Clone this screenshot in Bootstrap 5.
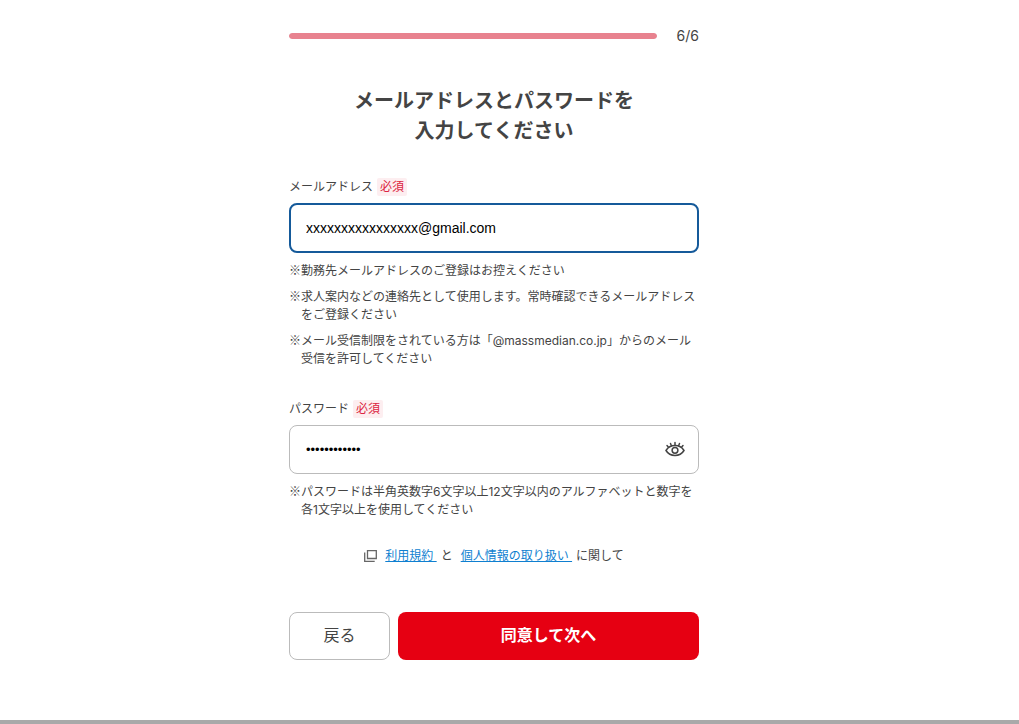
<!DOCTYPE html>
<html lang="ja">
<head>
<meta charset="utf-8">
<meta name="viewport" content="width=device-width, initial-scale=1">
<title>会員登録</title>
<link href="https://cdn.jsdelivr.net/npm/bootstrap@5.3.0/dist/css/bootstrap.min.css" rel="stylesheet">
<style>
  body { font-family: Inter, "Noto Sans CJK JP", sans-serif; font-size: 12px; line-height: 18px; color: #444; background: #fff; }
  .signup-page { padding: 27px 43px 60px 12px; border-bottom: 4px solid #a9a9a9; }
  .signup-form { max-width: 410px; }
  .step-bar { height: 6px; border-radius: 3px; background: #f3f3f3; }
  .step-bar .progress-bar { background: #e8828f; border-radius: 3px; }
  .step-count { font-size: 14px; }
  .page-title { font-size: 20px; line-height: 30px; font-weight: 700; margin: 41px 0 32px; }
  .entry-label { margin-bottom: 7px; }
  .required-tag { color: #dc2440; background: #fdeef0; border-radius: 2px; padding: 0 3px; margin-left: 4px; }
  .entry { height: 49px; padding: 0 16px; border: 1px solid #bbb; border-radius: 8px; font: 14px "Liberation Sans", Arial, sans-serif; color: #000; }
  .entry, .entry:focus { color: #000; box-shadow: none; }
  .entry-active, .entry-active:focus { border: 2px solid #155a9a; padding: 0 15px; height: 50px; }
  .entry-secret { font-size: 13px; }
  .notes { margin: 9px 0 0; }
  .notes li { padding-left: 12px; }
  .notes li::before { content: "※"; display: inline-block; width: 12px; margin-left: -12px; font-family: "Noto Sans CJK JP", sans-serif; line-height: 1; }
  .eye-btn { right: 14px; }
  .terms a { color: #0f7fd0; }
  .actions { margin-top: 47px; }
  .action { height: 48px; border-radius: 8px; font-size: 16px; padding: 0 12px 3px; }
  .action-back, .action-back:hover { border: 1px solid #bbb; color: #444; background: #fff; width: 101px; }
  .action-next, .action-next:hover { background: #e60012; color: #fff; border: 0; font-weight: 700; }
</style>
</head>
<body>
<main class="signup-page">
  <form class="signup-form mx-auto">
    <div class="d-flex align-items-center">
      <div class="progress step-bar flex-grow-1" role="progressbar" aria-label="進捗" aria-valuenow="6" aria-valuemin="0" aria-valuemax="6">
        <div class="progress-bar w-100"></div>
      </div>
      <span class="step-count ps-3 ms-1">6/6</span>
    </div>
    <h1 class="page-title text-center">メールアドレスとパスワードを<br>入力してください</h1>

    <div class="entry-label d-flex"><label for="email">メールアドレス</label><span class="required-tag">必須</span></div>
    <input id="email" type="email" class="form-control entry entry-active" value="xxxxxxxxxxxxxxxx@gmail.com">
    <ul class="notes list-unstyled d-grid gap-2">
      <li>勤務先メールアドレスのご登録はお控えください</li>
      <li>求人案内などの連絡先として使用します。常時確認できるメールアドレス<br>をご登録ください</li>
      <li>メール受信制限をされている方は「@massmedian.co.jp」からのメール<br>受信を許可してください</li>
    </ul>

    <div class="entry-label d-flex mt-4 pt-2"><label for="password">パスワード</label><span class="required-tag">必須</span></div>
    <div class="position-relative">
      <input id="password" type="password" class="form-control entry entry-secret pe-5" value="abcdef123456">
      <button type="button" class="eye-btn btn border-0 p-0 d-flex position-absolute top-50 translate-middle-y" aria-label="パスワードを表示">
        <svg width="20" height="18" viewBox="0 0 20 18" fill="none" stroke="#444" stroke-width="1.5" stroke-linecap="round"><path d="M1 9.500C3 6.200 6.200 4.500 10 4.500s7 1.700 9 5c-2 3.300-5.200 5-9 5s-7-1.700-9-5z"/><circle cx="10" cy="9.300" r="2.900"/><path d="M10 4V1.500M6.300 4.600 5.500 2.500M13.700 4.600l.8-2.100M3.300 6 2 4.500M16.700 6 18 4.500"/></svg>
      </button>
    </div>
    <ul class="notes list-unstyled">
      <li>パスワードは半角英数字6文字以上12文字以内のアルファベットと数字を<br>各1文字以上を使用してください</li>
    </ul>

    <p class="terms d-flex justify-content-center align-items-center my-0 pt-4 mt-1">
      <svg class="me-2" width="13" height="12" viewBox="0 0 13 12" fill="none" stroke="#666" stroke-width="1.300"><path d="M3.500.700h8.800v7.800H3.500z"/><path d="M.700 2.500v8.800h10"/></svg>
      <a href="#terms">利用規約&nbsp;</a><span class="ps-1 pe-2">と</span><a href="#privacy">個人情報の取り扱い&nbsp;</a><span class="ps-1">に関して</span>
    </p>

    <div class="actions d-flex gap-2">
      <button type="button" class="btn action action-back">戻る</button>
      <button type="submit" class="btn action action-next flex-grow-1">同意して次へ</button>
    </div>
  </form>
</main>
<script src="https://cdn.jsdelivr.net/npm/bootstrap@5.3.0/dist/js/bootstrap.bundle.min.js"></script>
</body>
</html>
